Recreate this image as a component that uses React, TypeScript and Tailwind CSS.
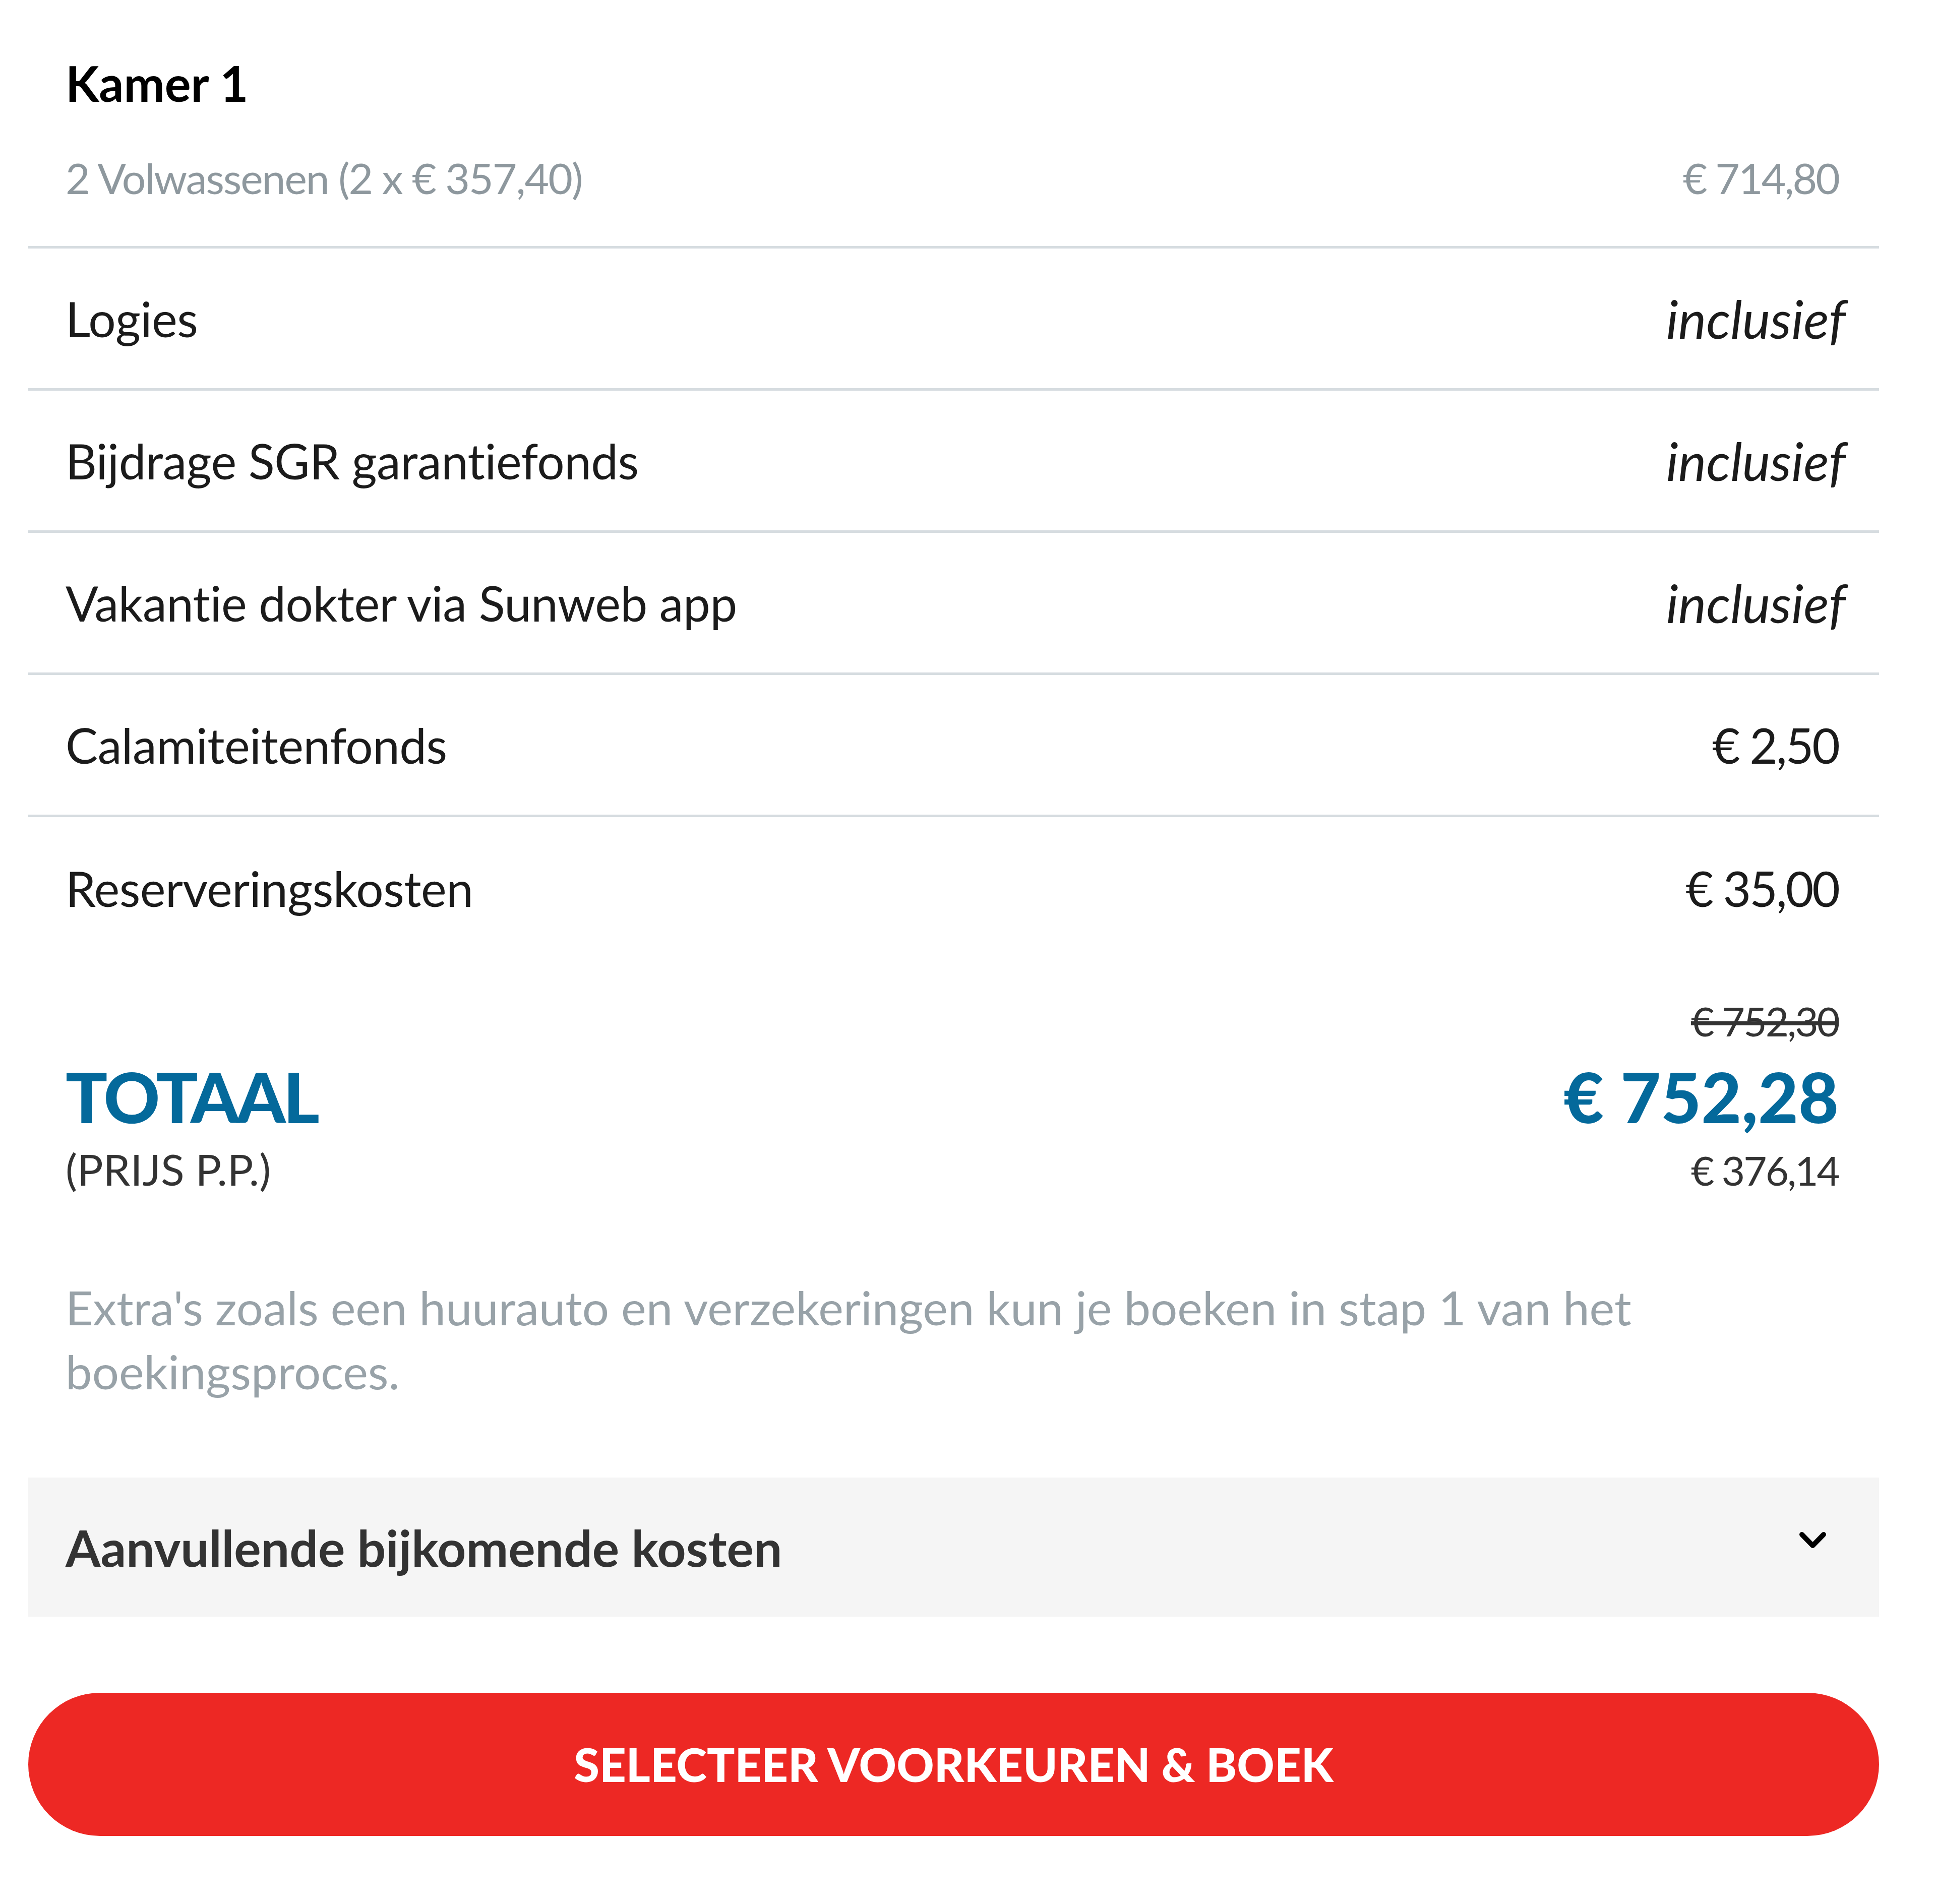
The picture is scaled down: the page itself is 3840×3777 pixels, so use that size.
import React from 'react'

const rows = [
  { label: 'Logies', value: 'inclusief', italic: true },
  { label: 'Bijdrage SGR garantiefonds', value: 'inclusief', italic: true },
  { label: 'Vakantie dokter via Sunweb app', value: 'inclusief', italic: true },
  { label: 'Calamiteitenfonds', value: '€ 2,50', italic: false },
  { label: 'Reserveringskosten', value: '€ 35,00', italic: false },
]

export default function App() {
  return (
    <div className="min-h-[3777px] bg-white font-['Lato',sans-serif] text-[#1b1b1b] [font-variant-ligatures:none]">
      <div className="ml-[56px] w-[3671px] pb-[133px]">

        {/* Kamer */}
        <div className="pl-[74px] pr-[80px] pt-[105px] pb-[80px] border-b-[5px] border-[#d6dce0]">
          <h3 className="text-[97px] leading-[120px] font-bold text-black">Kamer 1</h3>
          <div className="mt-[73px] flex items-baseline justify-between text-[84px] leading-[110px] tracking-[-2px] text-[#8e989e]">
            <span>2 Volwassenen (2 x € 357,40)</span>
            <span className="tracking-[-3px]">€ 714,80</span>
          </div>
        </div>

        {/* Regels */}
        {rows.map((r, i) => (
          <div
            key={r.label}
            className={`flex h-[282px] items-center justify-between pl-[74px] pr-[80px] text-[96px] tracking-[-0.5px] ${
              i < rows.length - 1 ? 'border-b-[5px] border-[#d6dce0]' : ''
            }`}
          >
            <span>{r.label}</span>
            <span className={r.italic ? 'italic text-[105px] tracking-normal -mr-[14px]' : 'tracking-[-3px]'}>{r.value}</span>
          </div>
        ))}

        {/* Totaal */}
        <div className="mt-[72px] pl-[74px] pr-[80px]">
          <div className="flex justify-end text-[80px] leading-[100px] tracking-[-3px] text-[#333]">
            <span className="line-through">€ 752,30</span>
          </div>
          <div className="mt-[25px] flex items-center justify-between text-[138px] leading-[150px] font-black text-[#04699b]">
            <span className="tracking-[-5px]">TOTAAL</span>
            <span>€ 752,28</span>
          </div>
          <div className="mt-[19px] flex items-baseline justify-between text-[86px] leading-[100px] text-[#333]">
            <span>(PRIJS P.P.)</span>
            <span className="text-[80px] tracking-[-3px]">€ 376,14</span>
          </div>
        </div>

        <p className="mt-[158px] pl-[74px] pr-[80px] text-[94px] leading-[127px] text-[#98a2a8]">
          Extra's zoals een huurauto en verzekeringen kun je boeken in stap 1 van het boekingsproces.
        </p>

        {/* Aanvullende kosten */}
        <button className="mt-[148px] flex h-[276px] w-full items-center justify-between bg-[#f5f5f5] pl-[74px] pr-[105px] text-left">
          <span className="text-[100px] font-bold text-[#333]">Aanvullende bijkomende kosten</span>
          <svg width="53" height="33" viewBox="0 0 53 33" className="-mt-[28px]">
            <polyline points="5,5 26.5,27 48,5" fill="none" stroke="#000" strokeWidth="10" strokeLinecap="round" strokeLinejoin="round" />
          </svg>
        </button>

        {/* Boek */}
        <button className="mt-[151px] flex h-[284px] w-full items-center justify-center rounded-full bg-[#ed2824] text-[92px] font-black uppercase text-white">
          Selecteer voorkeuren &amp; boek
        </button>
      </div>
    </div>
  )
}
